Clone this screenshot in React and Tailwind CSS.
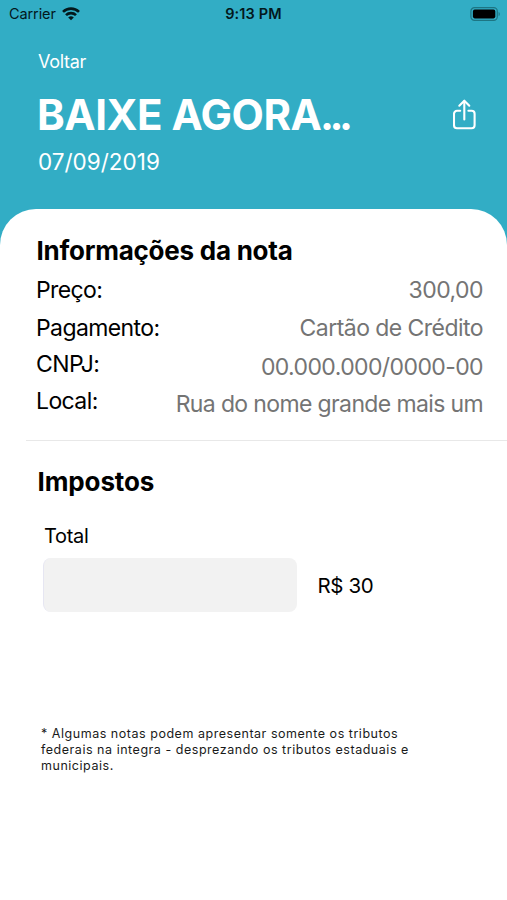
const labels = [
  { text: "Preço:", style: "h-[42px]" },
  { text: "Pagamento:", style: "h-[34px]" },
  { text: "CNPJ:", style: "h-[38px]" },
  { text: "Local:", style: "h-[36px]" },
];

const values = [
  { text: "300,00", style: "h-[42px] tracking-[-0.55px]" },
  { text: "Cartão de Crédito", style: "h-[34px] tracking-[-0.55px]" },
  { text: "00.000.000/0000-00", style: "h-[44px] tracking-[-0.6px]" },
  { text: "Rua do nome grande mais um", style: "h-[30px] tracking-[-0.63px]" },
];

function WifiIcon() {
  return (
    <svg width="18" height="14" viewBox="0 0 18 14" fill="none" stroke="#03181c" strokeWidth="2.6">
      <path d="M1 4.9a11.4 11.4 0 0 1 16 0" />
      <path d="M4 8.2a7.1 7.1 0 0 1 10 0" />
      <path d="M9 13.2 6.2 10.5a4 4 0 0 1 5.6 0Z" fill="#03181c" stroke="none" />
    </svg>
  );
}

function BatteryIcon() {
  return (
    <svg width="31" height="14" viewBox="0 0 31 14">
      <rect x="0.9" y="0.7" width="26.4" height="12.6" rx="3.6" fill="none" stroke="#1d7583" strokeWidth="1.2" />
      <rect x="2.9" y="2.6" width="22.4" height="8.8" rx="1.8" fill="#000" />
      <path d="M28.6 4.9c1.6.6 1.6 3.6 0 4.2Z" fill="#1d7583" />
    </svg>
  );
}

function ShareIcon() {
  return (
    <svg
      width="24"
      height="32"
      viewBox="0 0 24 32"
      fill="none"
      stroke="#fff"
      strokeWidth="2.1"
      strokeLinecap="round"
      strokeLinejoin="round"
    >
      <path d="M7.2 11.8H4a3 3 0 0 0-3 3v11.4a3 3 0 0 0 3 3h14.6a3 3 0 0 0 3-3V14.8a3 3 0 0 0-3-3h-3.2" />
      <path d="M11.3 20.5V2.2" />
      <path d="m6.3 6.7 5-5 5 5" />
    </svg>
  );
}

export default function App() {
  return (
    <main className="w-[507px] h-[900px] overflow-hidden bg-white font-['Inter',sans-serif] text-black whitespace-nowrap">
      <header className="h-[245px] bg-[#32adc5] text-white">
        {/* STATUS BAR */}
        <div className="grid grid-cols-3 items-center h-[27px] pl-[8px] pr-[6px] text-[#03181c]">
          <div className="flex items-center gap-[6px] pl-px text-[14.5px] tracking-[-0.1px]">
            Carrier
            <WifiIcon />
          </div>
          <div className="pr-[2px] text-center text-[14.5px] font-semibold tracking-[0.15px]">9:13 PM</div>
          <div className="flex justify-end">
            <BatteryIcon />
          </div>
        </div>

        <div className="mt-px flex items-center h-[66px] pl-[38px] text-[18px] tracking-[-0.3px]">Voltar</div>

        <div className="flex items-center justify-between h-[42px] pl-[37px] pr-[30px]">
          <h1 className="text-[42px] leading-[42px] font-bold tracking-[-0.5px]">
            BAIXE AGOR<span className="tracking-[-1.8px]">A</span>
            <span className="tracking-[-4.6px]">...</span>
          </h1>
          <ShareIcon />
        </div>
        <div className="flex items-center h-[51px] pl-[38px] text-[22.5px]">07/09/2019</div>
      </header>

      {/* CARD */}
      <section className="relative -mt-[36.5px] rounded-t-[36px] bg-white pt-[23.5px]">
        <h2 className="flex items-center h-9 pl-[36.5px] text-[26px] font-bold tracking-[-0.25px]">
          Informações da nota
        </h2>

        <div className="mt-px flex justify-between pl-[36px] pr-[24px] text-[23px]">
          <ul className="tracking-[-0.6px]">
            {labels.map((label) => (
              <li key={label.text} className={`flex items-center ${label.style}`}>
                {label.text}
              </li>
            ))}
          </ul>
          <ul className="text-[#747474]">
            {values.map((value) => (
              <li key={value.text} className={`flex items-center justify-end ${value.style}`}>
                {value.text}
              </li>
            ))}
          </ul>
        </div>

        <div className="mt-[21px] ml-[26px] h-px bg-[#e8e8e8]" />

        {/* TAXES */}
        <h2 className="mt-[22px] flex items-center h-9 pl-[37.5px] text-[26px] font-bold tracking-[-0.12px]">
          Impostos
        </h2>
        <div className="mt-[19px] flex items-center h-9 pl-[44px] text-[20px] tracking-[-0.3px]">Total</div>
        <div className="mt-1 ml-[43px] flex items-center">
          <div className="w-[254px] h-[54px] rounded-lg border-l border-[#e6e6f2] bg-[#f2f2f2]" />
          <span className="ml-[20.5px] pt-[2px] text-[20.5px] tracking-[-0.4px]">R$ 30</span>
        </div>

        <p className="mt-[114px] ml-[41px] text-[12.5px] leading-4 tracking-[0.53px] text-[#1a1a1a]">
          * Algumas notas podem apresentar somente os tributos
          <br />
          federais na integra - desprezando os tributos estaduais e
          <br />
          municipais.
        </p>
      </section>
    </main>
  );
}
